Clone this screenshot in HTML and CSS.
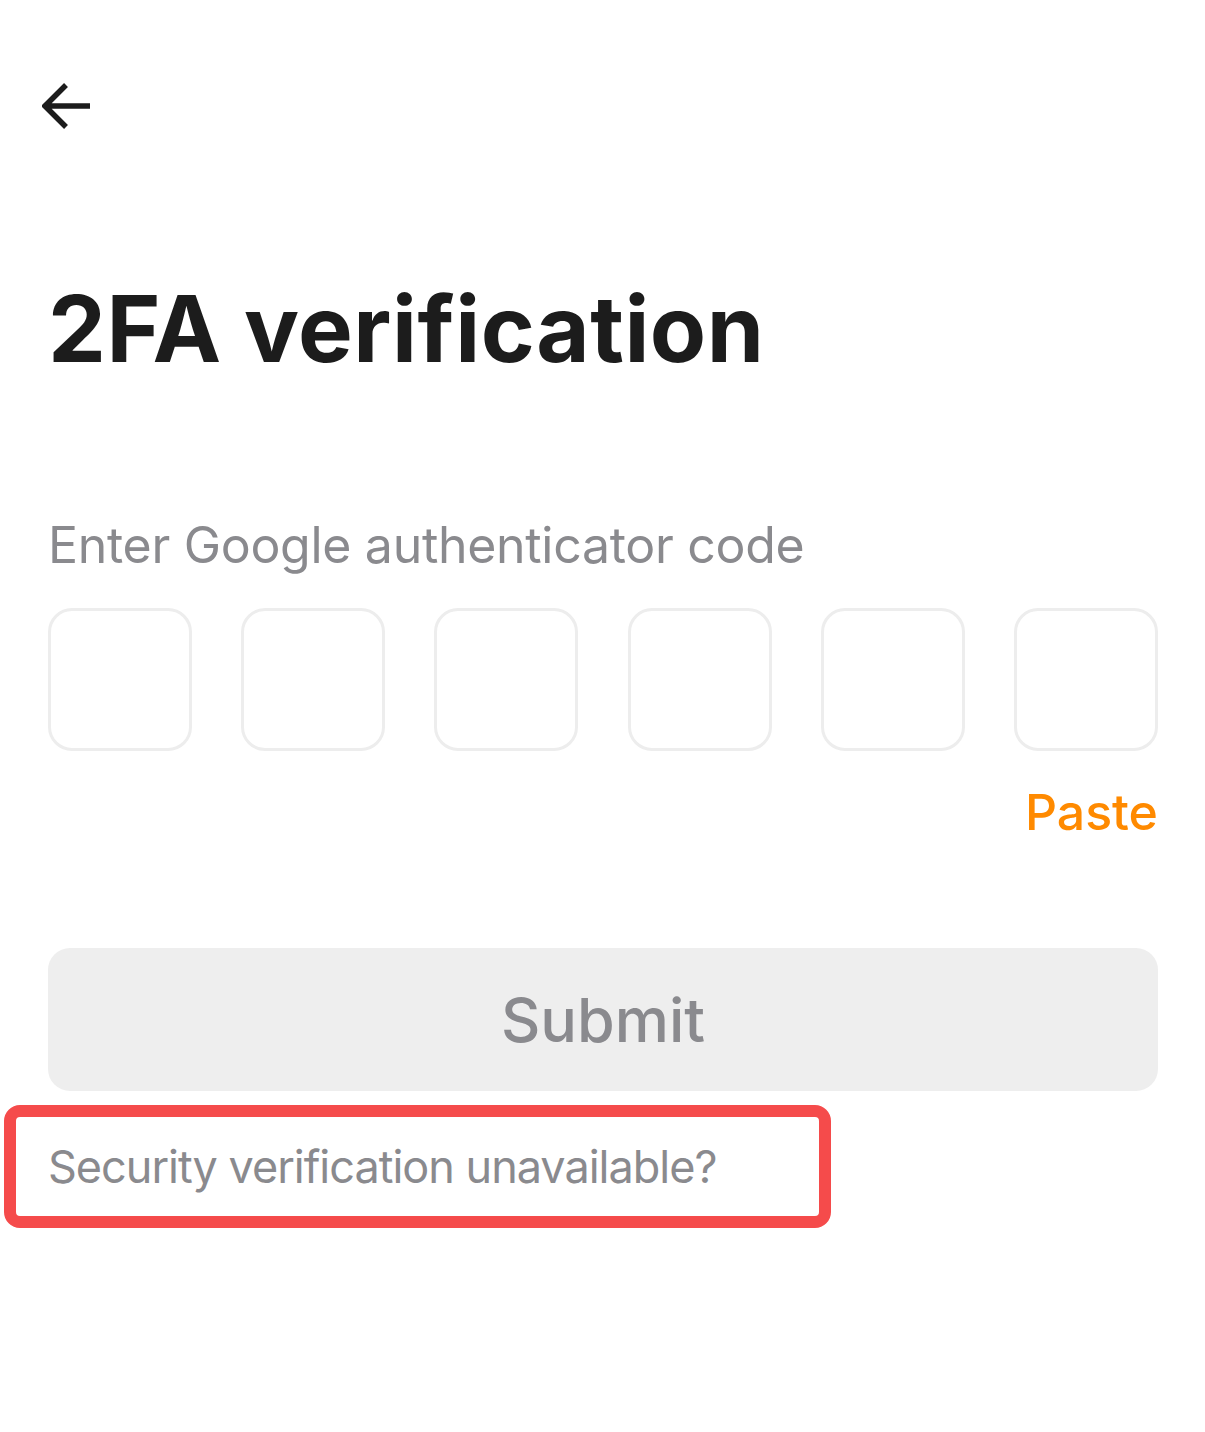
FILE: index.html
```html
<!DOCTYPE html>
<html>
<head>
<meta charset="utf-8">
<link rel="stylesheet" href="styles.css">
</head>
<body>
<div class="page">
  <div class="topbar">
    <svg class="back" width="52" height="52" viewBox="0 0 52 52">
      <path d="M24 3 L3 24 L24 45 M3 24 L48 24" fill="none" stroke="#1c1c1c" stroke-width="5.5" stroke-linejoin="miter"/>
    </svg>
  </div>
  <h1 class="title">2FA verification</h1>
  <div class="label">Enter Google authenticator code</div>
  <div class="codes">
    <div class="cell"></div>
    <div class="cell"></div>
    <div class="cell"></div>
    <div class="cell"></div>
    <div class="cell"></div>
    <div class="cell"></div>
  </div>
  <div class="paste-row"><span class="paste">Paste</span></div>
  <button class="submit">Submit</button>
  <div class="highlight">
    <span class="help">Security verification unavailable?</span>
  </div>
</div>
</body>
</html>
```
FILE: styles.css
```css
html, body {
  margin: 0;
  padding: 0;
  background: #ffffff;
}
.page {
  padding: 0 47px 0 48px;
  font-family: Inter, "Noto Sans", sans-serif;
}
.topbar {
  padding-top: 82px;
  height: 52px;
}
.back {
  display: block;
  margin-left: -6px;
}
.title {
  margin: 145px 0 0 0;
  font-size: 92px;
  font-weight: 700;
  line-height: 100px;
  color: #1c1c1c;
  letter-spacing: 0.5px;
}
.label {
  margin-top: 136px;
  font-size: 50px;
  line-height: 60px;
  color: #8a8a8e;
  font-weight: 400;
  letter-spacing: -0.3px;
}
.codes {
  margin-top: 33px;
  display: flex;
  justify-content: space-between;
}
.cell {
  width: 138px;
  height: 137px;
  border: 3px solid #ededed;
  border-radius: 24px;
}
.paste-row {
  display: flex;
  justify-content: flex-end;
  margin-top: 29px;
}
.paste {
  font-size: 50px;
  line-height: 64px;
  color: #ff8a00;
  font-weight: 500;
}
.submit {
  display: block;
  width: 100%;
  margin-top: 104px;
  height: 143px;
  border: none;
  border-radius: 22px;
  background: #eeeeee;
  color: #8a8a8e;
  font-family: Inter, "Noto Sans", sans-serif;
  font-size: 61px;
  font-weight: 500;
}
.highlight {
  margin: 14px 0 0 -44px;
  width: 771px;
  height: 99px;
  border: 12px solid #f54b4b;
  border-radius: 16px;
  display: flex;
  align-items: center;
  padding-left: 32px;
}
.help {
  font-size: 45px;
  color: #8a8a8e;
  letter-spacing: -1px;
}
```
